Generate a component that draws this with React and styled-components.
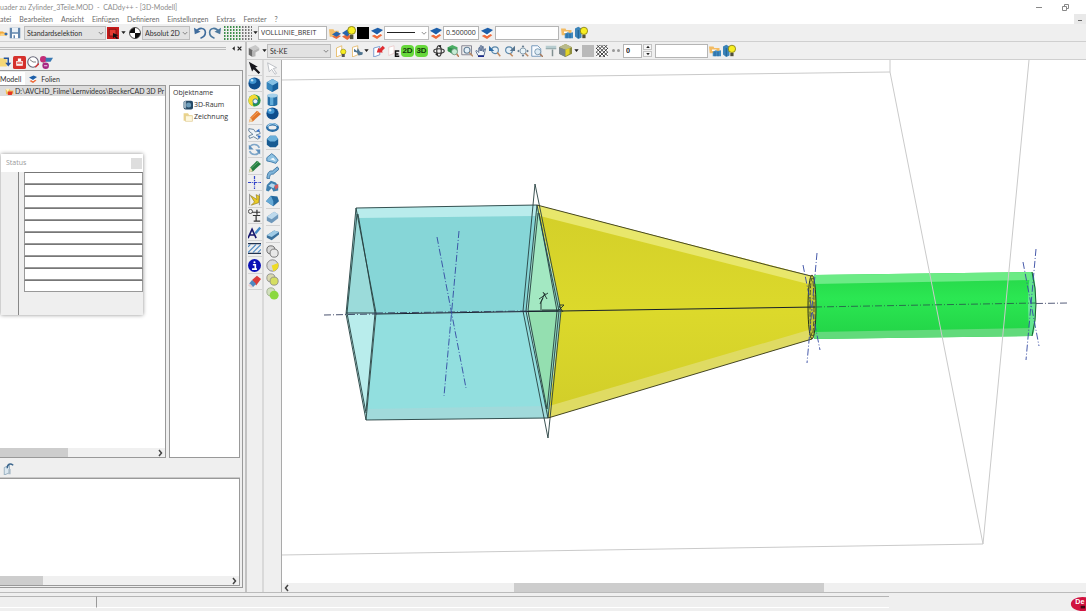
import React from 'react'
import styled, { createGlobalStyle } from 'styled-components'

const menus = ['atei', 'Bearbeiten', 'Ansicht', 'Einfügen', 'Definieren', 'Einstellungen', 'Extras', 'Fenster', '?']

const drawTools = ['arrow', 'sphere', 'swirl', 'pencilOrange', 'hands', 'cycle', 'pencilGreen', 'axis', 'measure', 'dimension', 'letter', 'hatchBlue', 'info', 'eraser']

const solidTools = [
    ['arrowLight'],
    ['cube', 'cylinder', 'sphere', 'ring', 'prism'],
    ['bend', 'sweep', 'cubes', 'wedge'],
    ['bar'],
    ['slab'],
    ['union', 'unionYellow', 'unionLime', 'unionGreen'],
]

const shapes = {
    folder: <><path d="M0 5h6l2 2h5v7H0z" fill="#f2a93c" /><path d="M1 9h13l-3 5H0z" fill="#fbd58a" /><path d="M8 10l4-3 4 3-4 3z" fill="#2c67b0" /></>,
    save: <><path d="M1 1h14v14H1z" fill="#6286ad" /><path d="M4 1h8v6H4z" fill="#e9f0f6" /><path d="M4 9h8v6H4z" fill="#fff" /><path d="M6 11h2v4H6z" fill="#6286ad" /></>,
    redbox: <><path d="M0 0h16v16H0z" fill="#c61a1a" /><path d="M3 3h9v9H3z" fill="#e43a30" stroke="#6d1010" /><path d="M8 8l7 3-3 1 3 3-2 1-3-3-2 2z" fill="#111" /></>,
    ball: <><circle cx="8" cy="8" r="7.3" fill="#fff" stroke="#111" /><path d="M8 8V1a7 7 0 0 0-7 7zM8 8v7a7 7 0 0 0 7-7z" fill="#111" /></>,
    undo: <><path d="M3 7C6 1 14 2 14 8c0 4-3 6-6 7" fill="none" stroke="#3f6c9d" strokeWidth="2" /><path d="M0 2l1 8 7-3z" fill="#3f6c9d" /></>,
    redo: <><path d="M13 7C10 1 2 2 2 8c0 4 3 6 6 7" fill="none" stroke="#4d799f" strokeWidth="2" /><path d="M16 2l-1 8-7-3z" fill="#4d799f" /></>,
    layers: <><path d="M1 12l4-2 3 2 4-3 3 2-7 5z" fill="#ee6b3c" /><path d="M1 8l7-3 7 3-7 4z" fill="#fff" /><path d="M0 5l9-4 7 3-8 6z" fill="#1e5fa9" /></>,
    folderLayers: <><path d="M0 3h6l1 2h6v8H1z" fill="#f1bd6a" /><path d="M4 13l6-3 6 2-6 4z" fill="#e8683a" /><path d="M4 10l6-4 6 3-6 4z" fill="#2765ad" /></>,
    folderBlue: <><path d="M0 2h6l1 2h7v7H1z" fill="#f3bb62" /><path d="M4 6h6v2H4z" fill="#fff" /><path d="M5 9l4-2 3 1 4-1v8H5z" fill="#408abf" /><path d="M8 9v6M12 9v6" stroke="#225a91" /></>,
    layersBulb: <><path d="M0 12l6-3 5 3-5 4z" fill="#e8683a" /><path d="M0 8l6-4 5 3-5 5z" fill="#2765ad" /><circle cx="11" cy="5" r="4.5" fill="#f7ee22" stroke="#817a12" /><path d="M9 10h4v5H9z" fill="#50503c" /></>,
    blueBulb: <><path d="M0 3l4-2 4 2v11l-4 2-4-3z" fill="#3b83b8" /><path d="M4 5v10" stroke="#185886" /><circle cx="11" cy="6" r="4.5" fill="#f7ee22" stroke="#817a12" /><path d="M9 11h4v4H9z" fill="#50503c" /></>,
    docBulb: <><path d="M2 4l7-3v12l-7 3z" fill="#fff" stroke="#e4b14e" /><circle cx="11" cy="9" r="3.500" fill="#f7ee22" stroke="#a39818" /><path d="M9 12h4v4H9z" fill="#555" /></>,
    docPart: <><path d="M2 3l7-2v12l-7 3z" fill="#fff" stroke="#e2b25a" /><path d="M4 5l4 3 1-4 3 5 4 1-1 3-5 1-2-4-4-1z" fill="#4f748f" /></>,
    docRed: <><path d="M1 4l8-2v11l-8 3z" fill="#fff" stroke="#5581c0" /><path d="M5 10l2-6 2 1 4-4 3 3-4 4 1 2z" fill="#df2c31" /></>,
    docE: <><path d="M1 3l7-2v10l-7 3z" fill="#fff" stroke="#eac4c4" /><path d="M9 8h6M9 12h5M9 15h6M10 8v7" stroke="#111" strokeWidth="2" /></>,
    rotate: <><ellipse cx="8" cy="8" rx="7" ry="3" fill="none" stroke="#333" strokeWidth="1.500" /><ellipse cx="8" cy="8" rx="3" ry="7" fill="none" stroke="#333" strokeWidth="1.500" /><path d="M11 0l-4 1 3 3zM3 13l4 2-1-5z" fill="#222" /></>,
    zoomGreen: <><path d="M1 3l6-3 7 3v5l-6 4-7-4z" fill="#4bae64" /><path d="M1 3l7 2v7l-7-4z" fill="#2f8d4b" /><circle cx="10" cy="9" r="4" fill="#c7ecd4" stroke="#55856c" /><path d="M13 12l3 4" stroke="#b8774f" strokeWidth="2" /></>,
    zoomRect: <><path d="M1 1h13v12H1z" fill="none" stroke="#667" /><circle cx="8" cy="7" r="4" fill="#e5f0f8" stroke="#68839a" strokeWidth="1.500" /><path d="M11 10l5 5" stroke="#b88863" strokeWidth="2" /></>,
    hand: <><path d="M4 14l-3-6 1-1 3 3V4l1-1 1 5V1h2v7l1-6h1v7l2-4h1l-2 9z" fill="#f2f6fa" stroke="#38527c" /><path d="M4 15h8" stroke="#1d2b8c" strokeWidth="2" /></>,
    zoomBack: <><circle cx="8" cy="7" r="4.500" fill="#e5f0f8" stroke="#5b87aa" strokeWidth="1.500" /><path d="M11 10l4 5" stroke="#c2885a" strokeWidth="2" /><path d="M0 1v7h7z" fill="#2f6da6" /></>,
    zoomNext: <><circle cx="8" cy="7" r="4.500" fill="#e5f0f8" stroke="#5b87aa" strokeWidth="1.500" /><path d="M9 11l4 4" stroke="#c2885a" strokeWidth="2" /><path d="M16 1v7H9z" fill="#56748e" /></>,
    zoomAll: <><circle cx="8" cy="8" r="4" fill="#e8f3f8" stroke="#6c879b" /><path d="M8 0l2 3H6zM8 16l2-3H6zM0 8l3-2v4zM16 8l-3-2v4z" fill="#60788b" /><path d="M11 11l4 4" stroke="#b88863" strokeWidth="2" /></>,
    zoomPage: <><path d="M1 1h8l4 4v10H1z" fill="#f8fbff" stroke="#527faa" /><circle cx="9" cy="9" r="4" fill="#dbeaf4" stroke="#6285a0" /><path d="M12 12l4 4" stroke="#a7795b" strokeWidth="2" /></>,
    brush: <><path d="M1 1h14v4H1z" fill="#b7cccf" /><path d="M1 5h14" stroke="#778f93" /><path d="M10 6v9" stroke="#829092" strokeWidth="2" /></>,
    cubeYellow: <><path d="M0 4l8-4 8 4v8l-8 4-8-4z" fill="#8f8d3c" /><path d="M0 4l8-4 8 4-8 3z" fill="#b9ba8a" /><path d="M0 4l8 3v9l-8-4z" fill="#7a858a" /><path d="M8 7l5-2v7l-5 3z" fill="#e3d326" /></>,
    gray: <path d="M0 0h16v16H0z" fill="#b9b9b9" />,
    hatch: <><path d="M0 0h16v16H0z" fill="#fff" /><path d="M0 5l5-5M0 10L10 0M0 15L15 0M4 16L16 4M9 16l7-7M11 0l5 5M6 0l10 10M1 0l15 15M0 4l12 12M0 9l7 7" stroke="#333" strokeWidth="1.200" /></>,
    black: <path d="M0 0h16v16H0z" fill="#000" />,
    partGray: <><path d="M1 4l9-4 5 4-9 4z" fill="#c8c8c8" /><path d="M1 4l5 3v9l-5-3z" fill="#6a6a6a" /><path d="M6 8l9-4v3l-5 3v5l-4 1z" fill="#b5b5b5" /></>,
    arrow: <path d="M1 1l11 6-3 1 6 6-2 2-6-6-2 3z" fill="#16161c" />,
    arrowLight: <path d="M2 1l11 6-4 1 4 6-2 1-4-6-3 3z" fill="#fff" stroke="#b1b5bb" />,
    sphere: <><circle cx="8" cy="8" r="7.500" fill="#0e4d8c" /><ellipse cx="6" cy="5" rx="4.500" ry="3.500" fill="#3f94d1" /><circle cx="5" cy="4" r="1.500" fill="#bfe2f6" /></>,
    swirl: <><circle cx="8" cy="8" r="7.500" fill="#269448" /><path d="M8 1a7 7 0 0 0-1 14c-3-3 0-6 3-6s4-6-2-8z" fill="#f4da34" /><circle cx="9" cy="9" r="3" fill="#e9f3fa" stroke="#2675a5" /></>,
    pencilOrange: <><path d="M1 15l2-6 8-8 5 4-10 9z" fill="#e2762a" /><path d="M1 15l2-6 3 5z" fill="#f0cf9e" /><path d="M4 10l9-8" stroke="#f7af6b" /></>,
    pencilGreen: <><path d="M1 15l2-6 8-8 5 4-10 9z" fill="#267e42" /><path d="M1 15l2-6 3 5z" fill="#e7d9ae" /><path d="M4 10l9-8" stroke="#6ab67a" /></>,
    hands: <><path d="M1 2l6 1 2 3 5-1 1 3-5 2 5 3-3 2-5-3-5 2-1-3 5-2-5-4z" fill="#eef3f8" stroke="#53718d" /><path d="M10 5l4-3v4zM12 10l4 1-3 3z" fill="#2f6fd0" /></>,
    cycle: <><path d="M2 6c2-6 10-5 12 0M14 10c-2 6-10 5-12 0" fill="none" stroke="#7fa6c8" strokeWidth="2" /><path d="M1 2v6h6zM15 14V8H9z" fill="#5d8fbc" /></>,
    axis: <path d="M8 0v16M0 8h16" stroke="#3243c9" strokeWidth="1.500" strokeDasharray="4 1 1 1" />,
    measure: <><path d="M2 1v14M14 1v14" stroke="#777" /><path d="M3 3l8 5-1-6 4 2-1 8-9 3 4-4z" fill="#eacb25" stroke="#856e12" strokeWidth=".7" /></>,
    dimension: <><circle cx="3" cy="3" r="2.500" fill="none" stroke="#333" /><path d="M5 4h10M11 1v6M6 8h9M10 8v7M7 15h8" stroke="#333" strokeWidth="1.500" /></>,
    letter: <><path d="M0 15L5 4l5 11M2 11h6" fill="none" stroke="#15156b" strokeWidth="2" /><path d="M8 8l6-7 2 2-6 7z" fill="#4187c5" /></>,
    hatchBlue: <><path d="M0 2h16M0 14h16" stroke="#24324d" strokeWidth="1.500" /><path d="M0 6l3-3M0 13L10 3M6 13L16 3M12 13l4-4" stroke="#558fc7" strokeWidth="1.500" /></>,
    info: <><circle cx="8" cy="8" r="8" fill="#0a10b5" /><path d="M6 7h3v5M5 12.500h6" stroke="#fff" strokeWidth="2" fill="none" /><circle cx="8" cy="4" r="1.300" fill="#fff" /></>,
    eraser: <><path d="M5 6l6-5 5 4-6 8z" fill="#db3d39" /><path d="M1 11l4-5 5 5-4 4z" fill="#4d89c2" /><path d="M0 13l2-3 4 4-2 2z" fill="#e9d2d2" /></>,
    cube: <><path d="M1 4l7-4 7 4v8l-7 4-7-4z" fill="#18619c" /><path d="M1 4l7-4 7 4-7 4z" fill="#84c0e4" /><path d="M1 4l7 4v8l-7-4z" fill="#3686bd" /></>,
    cylinder: <><path d="M2 2h12v12c-2 3-10 3-12 0z" fill="#2670a8" /><path d="M5 3h4v12H5z" fill="#62acd9" /><ellipse cx="8" cy="3" rx="6" ry="2.500" fill="#a6d1eb" /></>,
    ring: <><ellipse cx="8" cy="8" rx="6.500" ry="4" fill="none" stroke="#2a6ea6" strokeWidth="3" /><path d="M2 7c2-5 9-5 12-1" fill="none" stroke="#9fcdea" strokeWidth="1.500" /></>,
    prism: <><path d="M1 5l4-4h7l3 4v7l-3 3H5l-4-3z" fill="#185b92" /><path d="M1 5l4-4h7l3 4-4 3H5z" fill="#6bb0db" /></>,
    bend: <><path d="M1 7l6-5 4 3 4 5-3 4-6-2-5-1z" fill="#8fc2e2" stroke="#2c6ca0" /><path d="M5 9l4-2 3 4z" fill="#f3fafd" /></>,
    sweep: <path d="M1 15c1-9 4-9 7-9l6-5 2 3-7 6c-4 0-4 1-5 6z" fill="#7eb4d9" stroke="#316b9b" />,
    cubes: <><path d="M1 6l5-5 6 2 3 4v6l-6 1-2-4-4 4-3-1z" fill="#3f7fae" /><path d="M3 7l4-3 5 2-3 4z" fill="#b4d8ee" /><path d="M10 7l5-2v4l-3 3z" fill="#d15a5c" /></>,
    wedge: <><path d="M0 9l6-7 8 1 2 6-7 6z" fill="#24699f" /><path d="M0 9l6-7 3 7v6z" fill="#66a9d5" /></>,
    bar: <><path d="M1 7l9-6 5 3v5l-8 6-6-3z" fill="#6f98bb" /><path d="M1 7l9-6 5 3-8 6z" fill="#bdd9ec" /></>,
    slab: <><path d="M1 9l9-6 6 2v3l-9 7-6-3z" fill="#3b719c" /><path d="M1 9l9-6 6 2-9 6z" fill="#a0cbe6" /></>,
    union: <><circle cx="6" cy="6" r="5" fill="#d8d8d8" stroke="#555" /><circle cx="10" cy="10" r="5" fill="#e8e8e8" stroke="#666" /></>,
    unionYellow: <><circle cx="8" cy="8" r="7" fill="#d8d8d8" stroke="#777" /><path d="M7 8l8-3c1 5-1 9-6 10z" fill="#eedb26" /></>,
    unionLime: <><circle cx="6" cy="6" r="5" fill="#d9d9ae" stroke="#888" /><circle cx="10" cy="10" r="5" fill="#d5de61" stroke="#888" /></>,
    unionGreen: <><circle cx="6" cy="6" r="5" fill="#d1dfbd" stroke="#9aa78d" /><circle cx="10" cy="10" r="5.500" fill="#8bd83d" /></>,
    importIcon: <><path d="M0 3h7l2 2v9H0z" fill="#f3d777" /><path d="M5 3h6v7" fill="none" stroke="#26549b" strokeWidth="2" /><path d="M7 9h8l-4 5z" fill="#26549b" /></>,
    stop: <><rect width="16" height="16" rx="2" fill="#d5302b" /><path d="M4 12V6h2V3h4v3h2v6z" fill="#fff" /><path d="M5 7h6v3H5z" fill="#e77f78" /></>,
    clock: <><circle cx="8" cy="8" r="7" fill="#fff" stroke="#667" strokeWidth="1.500" /><path d="M4 5l4 3h4" stroke="#555" fill="none" /><path d="M11 15l5-5" stroke="#d63b3b" strokeWidth="2" /></>,
    tree: <><circle cx="4" cy="4" r="4" fill="#c42d78" /><path d="M7 2h9l-3 5H7z" fill="#3a79b3" /><path d="M4 8v5h6" stroke="#555" fill="none" /><circle cx="7" cy="12" r="4" fill="#a82785" /><path d="M5 12h4" stroke="#fff" /></>,
    part: <><path d="M1 4h7l2 2h5v7H2z" fill="#f2c35a" /><path d="M5 8h9l-2 6H5z" fill="#e33526" /><path d="M1 3h7l-3 6z" fill="#fff0be" /></>,
    room: <><rect x="1" y="1" width="15" height="14" rx="3" fill="#264a66" /><path d="M0 3l5-2v13l-5-2z" fill="#9ab0bf" /><circle cx="9" cy="8" r="4" fill="#6d9dbb" /></>,
    sheet: <><path d="M1 2h7l2 3h5v9H1z" fill="#ead38a" /><path d="M4 6h11v9H4z" fill="#fdf7dc" stroke="#dec98f" /></>,
    clip: <><path d="M3 6l7-3v10l-7 3z" fill="#dce8f0" stroke="#86a0b4" /><path d="M7 7c0-6 4-7 8-4" fill="none" stroke="#3c668d" strokeWidth="2" /><path d="M10 8v7" stroke="#a9bac7" strokeWidth="3" /></>,
    caretDown: <path d="M1 4h14l-7 9z" fill="#222" />,
    caretUp: <path d="M1 12h14L8 3z" fill="#222" />,
    caretLeft: <path d="M12 1v14L4 8z" fill="#222" />,
    cross: <path d="M2 2l12 12M14 2L2 14" stroke="#222" strokeWidth="4" />,
}

function Icon({ name, size = 12 }) {
    return <svg width={size} height={size} viewBox="0 0 16 16" aria-hidden="true">{shapes[name]}</svg>
}

function Tool({ name, width, size }) {
    return <ToolButton $w={width} aria-label={name}><Icon name={name} size={size} /></ToolButton>
}

function DropArrow() {
    return <Tool name="caretDown" width={6} size={5} />
}

function Combo({ label, value, width, plain, children }) {
    return (
        <ComboBox $w={width} $plain={plain}>
            <select aria-label={label} defaultValue={value}><option>{value}</option></select>
            {children}
            <Chevron viewBox="0 0 8 6"><path d="M1 1l3 3 3-3" fill="none" stroke="#666" /></Chevron>
        </ComboBox>
    )
}

function ScrollBar({ left, start, size }) {
    return (
        <Scroll>
            {left && <ScrollButton aria-label="left"><svg width="6" height="8" viewBox="0 0 6 8"><path d="M4 1L1.500 4 4 7" fill="none" stroke="#444" strokeWidth="1.500" /></svg></ScrollButton>}
            <Track><Thumb style={{ marginLeft: start, width: size }} /></Track>
            {!left && <ScrollButton aria-label="right"><svg width="6" height="8" viewBox="0 0 6 8"><path d="M2 1l2.500 3L2 7" fill="none" stroke="#444" strokeWidth="1.500" /></svg></ScrollButton>}
        </Scroll>
    )
}

function DotGrid() {
    const dots = []
    for (let x = 0; x < 10; x++) {
        for (let y = 0; y < 5; y++) {
            dots.push(<rect key={x + '-' + y} x={1 + x * 3} y={y * 3} width="1.500" height="2" fill={x < 6 ? '#3f8f4c' : '#777'} />)
        }
    }
    return <svg width="30" height="14">{dots}</svg>
}

function Model() {
    return (
        <ModelSvg viewBox="282 60 804 522" preserveAspectRatio="xMinYMin meet">
            <defs>
                <linearGradient id="tube" x1="0" y1="0" x2="0" y2="1">
                    <stop offset="0" stopColor="#27d649" />
                    <stop offset=".4" stopColor="#2be752" />
                    <stop offset="1" stopColor="#22d246" />
                </linearGradient>
                <linearGradient id="cone" x1="0" y1="0" x2="0" y2="1">
                    <stop offset="0" stopColor="#d3cf29" />
                    <stop offset=".5" stopColor="#dcd92b" />
                    <stop offset="1" stopColor="#d1cd29" />
                </linearGradient>
            </defs>

            <path d="M356 208l181-3-10 107-151 2z" fill="#86d6d7" />
            <path d="M376 314l151-2 21 106-182 2z" fill="#92dfdf" />
            <path d="M356 208l181-3-1 11-178 2z" fill="#b9ecec" />
            <path d="M367 409l179-3 2 12-182 2z" fill="#a1dadb" />
            <path d="M356 208l20 105-30 1z" fill="#9bdbda" />
            <path d="M346 313h30l-10 107z" fill="#b9edec" />

            <path d="M537 205l275 71v63l-264 79 13-107z" fill="url(#cone)" />
            <path d="M537 205l275 71v9L540 216z" fill="#e8e76b" />
            <path d="M549 406l263-77v10l-264 79z" fill="#dfdb63" />
            <path d="M537 205l24 106-13 107-21-107z" fill="#92d8c8" />
            <path d="M537 210l21 101h-30z" fill="#a3e8c2" />
            <path d="M528 311h30l-11 103z" fill="#94dfb0" />

            <path d="M814 275l218-3q8 32 0 64l-218 3z" fill="url(#tube)" />
            <path d="M814 275l218-3 2 8-220 4z" fill="#6ceb86" />
            <path d="M814 332l220-4-2 8-218 3z" fill="#62da7b" />
            <ellipse cx="1032" cy="304" rx="4" ry="32" fill="#63e690" />
            <ellipse cx="812" cy="307" rx="4" ry="32" fill="#c0c536" stroke="#26331b" />
            <ellipse cx="812" cy="307" rx="2" ry="29" fill="none" stroke="#4e562a" strokeDasharray="5 2" />
            <path d="M1032 272q8 32 0 64" fill="none" stroke="#1d5b33" />

            <path d="M281 80L890 72V60M890 72l93 472L1029 60M281 555l702-11" fill="none" stroke="#cacaca" />

            <g fill="none" stroke="#263f3f" strokeWidth=".9">
                <path d="M356 208l181-3M366 420l182-2M356 208l-10 106 20 106 10-107zM357 214l-10 99 19 100M358 214l17 99-9 98" />
                <path d="M535 184l26 127-13 127-25-127z" />
                <path d="M537 205l-11 106 22 107 11-107zM538 213l-10 98 19 98M539 213l18 98-10 98" />
                <path d="M537 205l234 61 40 10M548 418l264-79" stroke="#34361b" />
            </g>
            <path d="M346 313h30M528 311h30" stroke="#263c45" fill="none" />
            <path d="M376 314l185-3 254-4" stroke="#17202b" fill="none" />
            <g fill="none" stroke="#3348a2" strokeDasharray="7 2 1 2" strokeWidth=".9">
                <path d="M324 315l52-1M376 313l151-2" stroke="#35405f" />
                <path d="M437 237l29 151M459 231l-15 165" />
                <path d="M815 307l221-4" stroke="#26634b" />
                <path d="M1036 303.500l32-.5" stroke="#444c6c" />
                <path d="M817 253l-10 110M803 265l17 85M1036 249l-10 111M1023 262l16 84" />
            </g>
            <path d="M541 310v-8l2-4M539 299l9-6M540 304l5-11M543 292l4 7M542 310h17l5-5h-5M559 306l4 6" fill="none" stroke="#1d302d" strokeWidth=".9" />
        </ModelSvg>
    )
}

function App() {
    return (
        <Page>
            <GlobalStyle />
            <TitleBar>
                <span>uader zu Zylinder_3Teile.MOD&nbsp; -&nbsp; CADdy++ - [3D-Modell]</span>
                <WindowButtons>
                    <button aria-label="minimize"><svg width="8" height="8"><path d="M1 4.500h6" stroke="#888" /></svg></button>
                    <button aria-label="restore"><svg width="8" height="8"><path d="M1.500 3.500h4v4h-4zM3.500 3V1.500h4v4H6" stroke="#888" fill="none" /></svg></button>
                </WindowButtons>
            </TitleBar>
            <MenuBar>
                {menus.map((menu) => <MenuItem key={menu}>{menu}</MenuItem>)}
                <ChildMinimize aria-label="minimize model"><svg width="6" height="6"><path d="M1 4.500h4" stroke="#666" /></svg></ChildMinimize>
            </MenuBar>
            <ToolBar>
                <Tool name="folder" width={8} size={8} />
                <Tool name="save" width={14} />
                <Spacer $w={2} />
                <Combo label="Auswahl" value="Standardselektion" width={82} />
                <Tool name="redbox" width={14} />
                <DropArrow />
                <Spacer $w={2} />
                <Tool name="ball" width={14} />
                <Combo label="Koordinaten" value="Absolut 2D" width={48} />
                <Spacer $w={3} />
                <Tool name="undo" width={14} size={13} />
                <Tool name="redo" width={14} size={13} />
                <Spacer $w={2} />
                <ToolButton $w={29} aria-label="grid"><DotGrid /></ToolButton>
                <DropArrow />
                <Field $w={69} aria-label="Linienart" defaultValue="VOLLLINIE_BREIT" />
                <Spacer $w={1} />
                <Tool name="folderLayers" width={14} />
                <Tool name="layersBulb" width={14} size={14} />
                <Tool name="black" width={13} />
                <Tool name="layers" width={15} />
                <Combo label="Linie" value="" width={45} plain>
                    <LineSample />
                </Combo>
                <Tool name="layers" width={14} />
                <Field $w={36} aria-label="Breite" defaultValue="0.500000" />
                <Tool name="layers" width={16} />
                <Field $w={64} aria-label="Ebene" />
                <Spacer $w={1} />
                <Tool name="folderBlue" width={14} />
                <Tool name="blueBulb" width={14} size={13} />
            </ToolBar>
            <Body>
                <SidePanel>
                    <Grip>
                        <GripLine />
                        <Tool name="caretLeft" width={6} size={5} />
                        <Tool name="cross" width={6} size={5} />
                    </Grip>
                    <PanelTools>
                        <Tool name="importIcon" width={12} />
                        <Tool name="stop" width={14} size={13} />
                        <Tool name="clock" width={13} />
                        <Tool name="tree" width={14} size={13} />
                    </PanelTools>
                    <PanelBox>
                        <Tabs>
                            <Tab $active>Modell</Tab>
                            <Tab><Icon name="layers" size={8} />Folien</Tab>
                        </Tabs>
                        <Split>
                            <TreeBox>
                                <TreeRow><Icon name="part" size={9} />D:\AVCHD_Filme\Lernvideos\BeckerCAD 3D Pr</TreeRow>
                                <Fill />
                                <ScrollBar start={0} size={68} />
                            </TreeBox>
                            <ObjectBox>
                                <h2>Objektname</h2>
                                <ul>
                                    <li><Icon name="room" size={10} />3D-Raum</li>
                                    <li><Icon name="sheet" size={10} />Zeichnung</li>
                                </ul>
                            </ObjectBox>
                        </Split>
                        <LowerTools><Tool name="clip" width={14} /></LowerTools>
                        <LowerBox>
                            <Fill />
                            <ScrollBar start={0} size={43} />
                        </LowerBox>
                    </PanelBox>
                </SidePanel>
                <Main>
                    <ToolBar>
                        <Tool name="partGray" width={14} />
                        <DropArrow />
                        <Combo label="Gruppe" value="St-KE" width={64} />
                        <Spacer $w={2} />
                        <Tool name="docBulb" width={15} />
                        <Spacer $w={2} />
                        <Tool name="docPart" width={13} />
                        <DropArrow />
                        <Spacer $w={2} />
                        <Tool name="docRed" width={15} />
                        <Tool name="docE" width={15} />
                        <ViewButton>2D</ViewButton>
                        <ViewButton>3D</ViewButton>
                        <Spacer $w={2} />
                        <Tool name="rotate" width={15} />
                        <Tool name="zoomGreen" width={14} />
                        <Tool name="zoomRect" width={14} />
                        <Tool name="hand" width={14} />
                        <Tool name="zoomBack" width={14} />
                        <Tool name="zoomNext" width={14} />
                        <Tool name="zoomAll" width={14} />
                        <Tool name="zoomPage" width={14} />
                        <Tool name="brush" width={14} />
                        <Tool name="cubeYellow" width={15} size={13} />
                        <DropArrow />
                        <Spacer $w={2} />
                        <Tool name="gray" width={14} />
                        <Tool name="hatch" width={14} />
                        <Dots><i /><i /></Dots>
                        <Field $w={19} $bold aria-label="Wert" defaultValue="0" />
                        <Spinner>
                            <button aria-label="up"><Icon name="caretUp" size={4} /></button>
                            <button aria-label="down"><Icon name="caretDown" size={4} /></button>
                        </Spinner>
                        <Spacer $w={3} />
                        <Field $w={53} aria-label="Filter" />
                        <Tool name="folderBlue" width={14} />
                        <Tool name="blueBulb" width={14} size={13} />
                    </ToolBar>
                    <Workspace>
                        <DrawColumn>
                            {drawTools.map((tool) => <Tool key={tool} name={tool} width={14} size={13} />)}
                        </DrawColumn>
                        <SolidColumn>
                            {solidTools.map((group, i) => (
                                <SolidGroup key={i}>
                                    {group.map((tool) => <Tool key={tool} name={tool} width={14} size={13} />)}
                                </SolidGroup>
                            ))}
                        </SolidColumn>
                        <Canvas>
                            <Model />
                            <ScrollBar left start="28%" size="39%" />
                        </Canvas>
                    </Workspace>
                </Main>
            </Body>
            <StatusBar>
                <StatusField $w="96px" />
                <StatusField $w="793px" $divider />
                <Logo viewBox="0 0 16 18">
                    <ellipse cx="13" cy="9" rx="13" ry="8" fill="#d1123f" />
                    <text x="5" y="9">De</text>
                    <path d="M11 11h5v3h-5z" fill="#3d0712" />
                </Logo>
            </StatusBar>
            <StatusWindow>
                <StatusTitle>Status<button aria-label="close status" /></StatusTitle>
                <StatusBody>
                    <StatusRows>
                        {Array.from({ length: 10 }, (_, i) => <input key={i} aria-label={`Status ${i + 1}`} />)}
                    </StatusRows>
                </StatusBody>
            </StatusWindow>
        </Page>
    )
}

const narrowFont = 'Lato, "Open Sans", sans-serif'

const GlobalStyle = createGlobalStyle`
* { box-sizing: border-box; }
body {
    margin: 0;
    overflow: hidden;
    background: #fff;
}
button, input, select {
    font: inherit;
    color: inherit;
    margin: 0;
    padding: 0;
    border: 0;
    background: none;
    border-radius: 0;
}
svg { display: block; flex: none; }
`

const Page = styled.div`
    height: 100vh;
    display: flex;
    flex-direction: column;
    overflow: hidden;
    background: #efefef;
    color: #303030;
    font: 7px/10px "Open Sans", "Noto Sans", sans-serif;
    white-space: nowrap;
`

const TitleBar = styled.header`
    display: flex;
    justify-content: space-between;
    align-items: center;
    height: 14px;
    background: #fff;
    color: #8c8c8c;
    font-family: ${narrowFont};
`

const WindowButtons = styled.div`
    display: flex;
    gap: 18px;
    padding-right: 17px;
`

const MenuBar = styled.nav`
    display: flex;
    align-items: center;
    gap: 8px;
    height: 10px;
    background: #fff;
    color: #6a6a6a;
    font-family: ${narrowFont};
`

const MenuItem = styled.button`
    line-height: 10px;
`

const ChildMinimize = styled.button`
    display: flex;
    align-items: center;
    justify-content: center;
    margin-left: auto;
    width: 12px;
    height: 10px;
    background: #e9e9e9;
`

const ToolBar = styled.div`
    display: flex;
    align-items: center;
    flex: none;
    height: 18px;
    background: #efefef;
    border-bottom: 1px solid #cfcfcf;
`

const ToolButton = styled.button`
    display: flex;
    align-items: center;
    justify-content: center;
    flex: none;
    width: ${(props) => props.$w}px;
    height: 14px;
    overflow: hidden;
`

const Spacer = styled.span`
    flex: none;
    width: ${(props) => props.$w}px;
`

const ComboBox = styled.div`
    position: relative;
    flex: none;
    width: ${(props) => props.$w}px;
    height: 14px;
    background: ${(props) => props.$plain ? '#fff' : '#e2e2e2'};
    border: 1px solid #bdbdbd;
    font-family: ${narrowFont};

    select {
        display: block;
        appearance: none;
        width: 100%;
        height: 12px;
        padding-left: 2px;
    }
`

const Chevron = styled.svg`
    position: absolute;
    right: 1px;
    top: 4px;
    width: 6px;
    height: 5px;
    pointer-events: none;
`

const LineSample = styled.span`
    position: absolute;
    left: 2px;
    right: 13px;
    top: 5px;
    height: 1px;
    background: #222;
    pointer-events: none;
`

const Field = styled.input`
    flex: none;
    width: ${(props) => props.$w}px;
    height: 14px;
    padding: 0 2px;
    background: #fff;
    border: 1px solid #b5b5b5;
    font-weight: ${(props) => props.$bold ? 'bold' : 'normal'};
`

const ViewButton = styled.button`
    flex: none;
    width: 13px;
    height: 12px;
    margin-right: 1px;
    border-radius: 4px;
    background: #67d83b;
    color: #123c0a;
    font: bold 8px/12px "Liberation Sans", sans-serif;
`

const Dots = styled.span`
    display: flex;
    justify-content: space-evenly;
    width: 14px;

    i {
        width: 3px;
        height: 3px;
        border-radius: 2px;
        background: #999;
    }
`

const Spinner = styled.div`
    display: flex;
    flex-direction: column;
    gap: 1px;
    width: 10px;
    padding-left: 1px;

    button {
        display: flex;
        align-items: center;
        justify-content: center;
        height: 6px;
        background: #f6f6f6;
        border: 1px solid #c4c4c4;
    }
`

const Body = styled.div`
    display: flex;
    flex: 1;
    min-height: 0;
`

const SidePanel = styled.aside`
    display: flex;
    flex-direction: column;
    flex: none;
    width: 247px;
    padding-bottom: 4px;
    border-right: 2px solid #c2c2c2;
`

const Grip = styled.div`
    display: flex;
    align-items: center;
    height: 12px;
    padding-right: 3px;
`

const GripLine = styled.span`
    flex: 1;
    height: 3px;
    margin-right: 4px;
    border: solid #bcbcbc;
    border-width: 1px 0;
`

const PanelTools = styled.div`
    display: flex;
    align-items: center;
    height: 16px;
`

const PanelBox = styled.div`
    display: flex;
    flex-direction: column;
    flex: 1;
    min-height: 0;
    margin-right: 2px;
    padding: 1px 2px 1px 0;
    border: solid #999;
    border-width: 1px 1px 1px 0;
`

const Tabs = styled.div`
    display: flex;
    align-items: stretch;
    height: 13px;
    font-family: ${narrowFont};
`

const Tab = styled.button`
    display: flex;
    align-items: center;
    gap: 4px;
    padding: ${(props) => props.$active ? '0 4px 0 0' : '0 4px'};
    background: ${(props) => props.$active ? '#fff' : 'none'};
`

const Split = styled.div`
    display: flex;
    flex: 1;
    gap: 3px;
    min-height: 0;
`

const TreeBox = styled.div`
    display: flex;
    flex-direction: column;
    flex: none;
    width: 166px;
    background: #fff;
    border: solid #999;
    border-width: 1px 1px 1px 0;
`

const TreeRow = styled.div`
    display: flex;
    align-items: center;
    gap: 1px;
    height: 10px;
    padding-left: 5px;
    background: #dcdcdc;
    font-family: ${narrowFont};
`

const Fill = styled.div`
    flex: 1;
`

const ObjectBox = styled.section`
    flex: 1;
    padding: 0 3px;
    background: #fff;
    border: 1px solid #999;

    h2 {
        margin: 0;
        font: inherit;
        line-height: 13px;
    }
    ul {
        margin: 0;
        padding: 0 0 0 10px;
        list-style: none;
    }
    li {
        display: flex;
        align-items: center;
        gap: 1px;
        height: 12px;
    }
`

const LowerTools = styled.div`
    flex: none;
    height: 20px;
    padding: 4px 0 0 1px;
    border-bottom: 1px solid #c9c9c9;
`

const LowerBox = styled.div`
    display: flex;
    flex-direction: column;
    flex: none;
    height: 108px;
    background: #fff;
    border: solid #999;
    border-width: 1px 1px 1px 0;
`

const Scroll = styled.div`
    display: flex;
    align-items: center;
    flex: none;
    height: 9px;
    background: #f0f0f0;
`

const ScrollButton = styled.button`
    display: flex;
    align-items: center;
    justify-content: center;
    width: 10px;
    height: 9px;
`

const Track = styled.div`
    flex: 1;
    height: 9px;
`

const Thumb = styled.div`
    height: 9px;
    background: #cdcdcd;
`

const Main = styled.main`
    display: flex;
    flex-direction: column;
    flex: 1;
    min-width: 0;
`

const Workspace = styled.div`
    display: flex;
    flex: 1;
    min-height: 0;
`

const DrawColumn = styled.div`
    display: flex;
    flex-direction: column;
    align-items: center;
    width: 17px;
    border-right: 2px solid #d9d9d9;

    ${ToolButton} {
        height: 16px;
        border-bottom: 1px solid #d2d2d2;
    }
    ${ToolButton}:nth-child(even) {
        margin-bottom: 1px;
    }
`

const SolidColumn = styled.div`
    display: flex;
    flex-direction: column;
    align-items: center;
    gap: 1px;
    width: 17px;
    padding-top: 1px;
`

const SolidGroup = styled.div`
    padding-bottom: 1px;
    border-bottom: 1px solid #d2d2d2;

    &:last-child {
        border: 0;
    }
`

const Canvas = styled.div`
    display: flex;
    flex-direction: column;
    flex: 1;
    min-width: 0;
    background: #fff;
    border-left: 1px solid #aaa;
`

const ModelSvg = styled.svg`
    flex: 1;
    width: 100%;
    min-height: 0;
`

const StatusBar = styled.footer`
    display: flex;
    flex: none;
    height: 19px;
    padding-top: 3px;
    border-top: 1px solid #bbb;
`

const StatusField = styled.div`
    flex: 0 1 ${(props) => props.$w};
    height: 12px;
    border-top: 1px solid #b5b5b5;
    border-left: ${(props) => props.$divider ? '1px solid #999' : 0};
    border-bottom: 1px solid #fff;
`

const Logo = styled.svg`
    width: 16px;
    height: 16px;
    margin-left: auto;

    text {
        fill: #fff;
        font: bold 8px "Liberation Sans", sans-serif;
    }
`

const StatusWindow = styled.section`
    position: absolute;
    left: 1px;
    top: 154px;
    width: 142px;
    background: #efefef;
    box-shadow: 0 0 4px rgba(0,0,0,0.45);
`

const StatusTitle = styled.div`
    display: flex;
    align-items: center;
    justify-content: space-between;
    height: 18px;
    padding: 0 1px 0 5px;
    background: #fff;
    color: #999;

    button {
        width: 11px;
        height: 11px;
        background: #dedede;
    }
`

const StatusBody = styled.div`
    padding-left: 17px;
`

const StatusRows = styled.div`
    display: flex;
    flex-direction: column;
    padding: 0 0 23px 5px;
    border-left: 1px solid #888;

    input {
        width: 100%;
        height: 12px;
        background: #fff;
        border: 1px solid #999;
        border-top-color: #777;
    }
`

export default App
